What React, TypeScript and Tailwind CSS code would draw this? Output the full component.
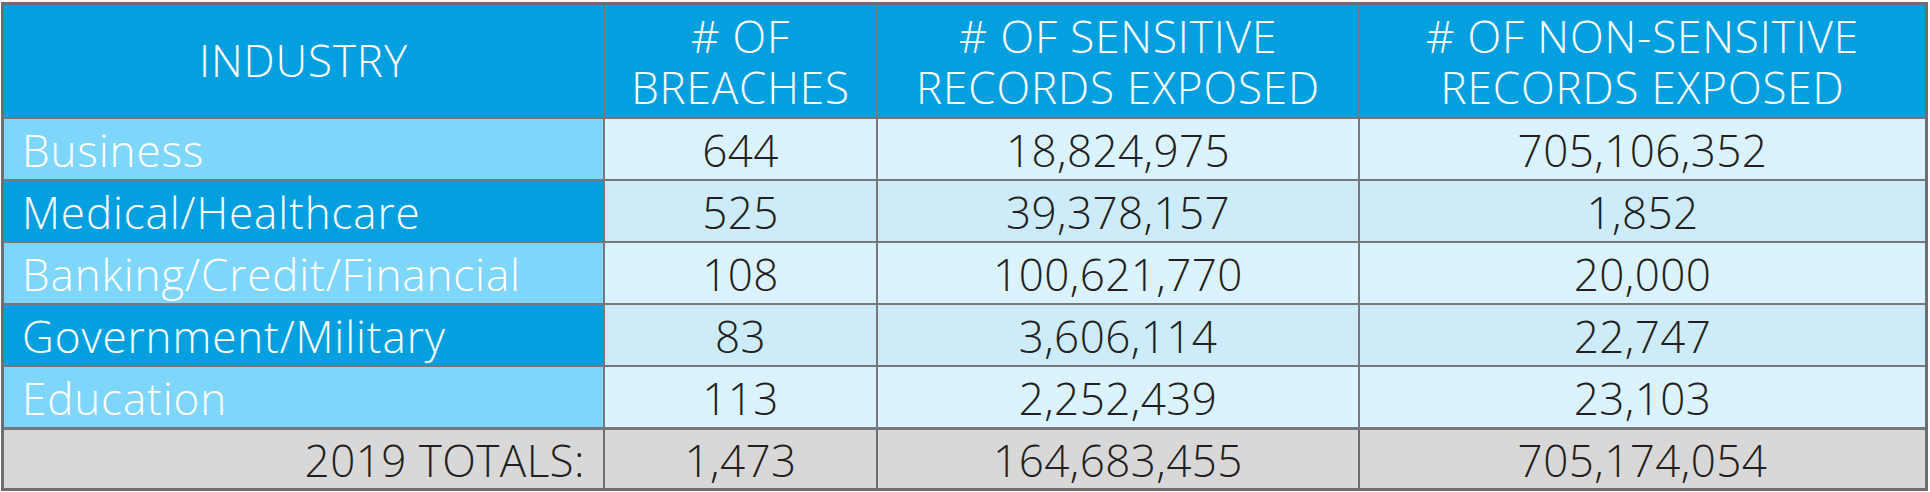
import React from "react";

type Row = {
  industry: string;
  breaches: string;
  sensitive: string;
  nonSensitive: string;
};

const rows: Row[] = [
  { industry: "Business", breaches: "644", sensitive: "18,824,975", nonSensitive: "705,106,352" },
  { industry: "Medical/Healthcare", breaches: "525", sensitive: "39,378,157", nonSensitive: "1,852" },
  { industry: "Banking/Credit/Financial", breaches: "108", sensitive: "100,621,770", nonSensitive: "20,000" },
  { industry: "Government/Military", breaches: "83", sensitive: "3,606,114", nonSensitive: "22,747" },
  { industry: "Education", breaches: "113", sensitive: "2,252,439", nonSensitive: "23,103" },
];

const font = { fontFamily: '"Open Sans", "Liberation Sans", sans-serif' };

export default function App() {
  return (
    <div className="w-[1930px] h-[492px] bg-white pt-[2px] pl-[1px]" style={font}>
      <div className="w-[1927px] border-[3px] border-[#6d6e71] bg-[#77787b]">
        {/* header */}
        <div className="grid grid-cols-[599px_271px_480px_565px] gap-[2px] font-light text-white text-[44px] leading-[51px] tracking-[0.02em] text-center">
          <div className="h-[112px] bg-[#049fdf] flex items-center justify-center pb-[2px]">INDUSTRY</div>
          <div className="h-[112px] bg-[#049fdf] flex items-center justify-center pt-[2px]">
            # OF<br />BREACHES
          </div>
          <div className="h-[112px] bg-[#049fdf] flex items-center justify-center pt-[2px]">
            # OF SENSITIVE<br />RECORDS EXPOSED
          </div>
          <div className="h-[112px] bg-[#049fdf] flex items-center justify-center pt-[2px]">
            # OF NON-SENSITIVE<br />RECORDS EXPOSED
          </div>
        </div>

        {/* data rows */}
        {rows.map((r, i) => {
          const dark = i % 2 === 1;
          const cell = `h-[60px] flex items-center justify-center pt-[2px] ${dark ? "bg-[#cdebf8]" : "bg-[#dbf3fe]"}`;
          return (
            <div
              key={r.industry}
              className="grid grid-cols-[599px_271px_480px_565px] gap-[2px] mt-[2px] font-light text-[44px] leading-none tracking-[0.01em] text-[#231f20]"
            >
              <div className={`h-[60px] flex items-center pl-[18px] pt-[2px] text-white tracking-[0.02em] ${dark ? "bg-[#049fdf]" : "bg-[#7fd6fb]"}`}>
                {r.industry}
              </div>
              <div className={cell}>{r.breaches}</div>
              <div className={cell}>{r.sensitive}</div>
              <div className={cell}>{r.nonSensitive}</div>
            </div>
          );
        })}

        {/* totals */}
        <div className="grid grid-cols-[599px_271px_480px_565px] gap-[2px] mt-[3px] font-light text-[44px] leading-none tracking-[0.01em] text-[#231f20] bg-[#6d6e71]">
          <div className="h-[58px] flex items-center justify-end pr-[18px] pt-[2px] bg-[#d9d8d9]">2019 TOTALS:</div>
          <div className="h-[58px] flex items-center justify-center pt-[2px] bg-[#d9d8d9]">1,473</div>
          <div className="h-[58px] flex items-center justify-center pt-[2px] bg-[#d9d8d9]">164,683,455</div>
          <div className="h-[58px] flex items-center justify-center pt-[2px] bg-[#d9d8d9]">705,174,054</div>
        </div>
      </div>
    </div>
  );
}
